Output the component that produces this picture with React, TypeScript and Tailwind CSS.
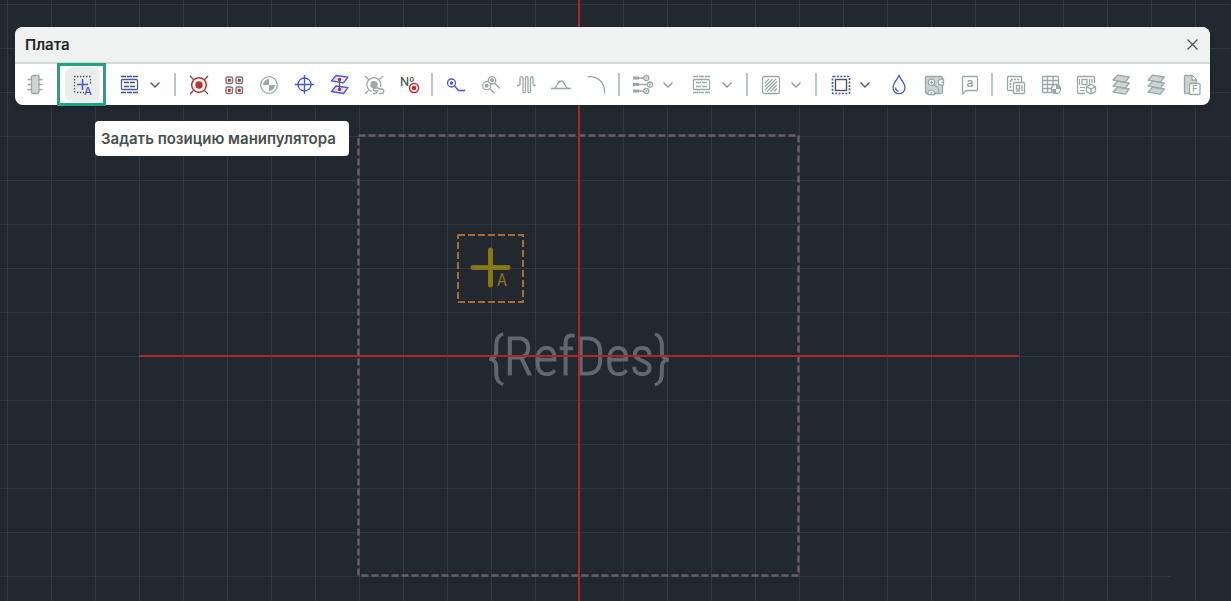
import type { ReactNode } from "react";
import clsx from "clsx";

const GRAY = "#9aa8a6";
const LIGHT = "#cdd5d4";
const DARK = "#4a5858";
const BLUE = "#4059d0";
const RED = "#b8322e";

type IconProps = { children: ReactNode; color?: string };

function Icon({ children, color = GRAY }: IconProps) {
  return (
    <svg
      width="21"
      height="21"
      viewBox="0 0 21 21"
      fill="none"
      stroke={color}
      strokeWidth="1.3"
      className="shrink-0 overflow-visible"
      aria-hidden="true"
    >
      {children}
    </svg>
  );
}

function ChipIcon() {
  return (
    <Icon>
      <path d="M2.5 5.5h15M2.5 10.5h15M2.5 15.5h15" />
      <rect x="6.5" y="1.5" width="7.5" height="18" rx="1.5" fill={LIGHT} />
    </Icon>
  );
}

function ManipulatorIcon() {
  return (
    <Icon color={BLUE}>
      <path
        d="M2 2.5h17M2.5 5v14M18.5 5v6M5 18.5h7"
        stroke={DARK}
        strokeDasharray="1.5 1.5"
      />
      <path d="M5 10.5h11M10.5 5v11" strokeWidth="1.5" />
      <text
        x="12"
        y="21"
        fontSize="11"
        fontWeight="500"
        fill={BLUE}
        stroke="none"
        className="font-['Inter',sans-serif]"
      >
        A
      </text>
    </Icon>
  );
}

function RoomIcon({ disabled = false }: { disabled?: boolean }) {
  const line = disabled ? GRAY : DARK;
  return (
    <Icon color={disabled ? GRAY : BLUE}>
      <path
        d="M2 2.5h17M2 18.5h17M5 8.5h11M5 12.5h11"
        stroke={line}
        strokeDasharray="5 1"
      />
      <rect x="2.5" y="5.5" width="16" height="10" rx="1" />
    </Icon>
  );
}

function TargetIcon() {
  return (
    <Icon color={RED}>
      <path
        d="M2 2l3.5 3.5M20 2l-3.5 3.5M2 20l3.5-3.5M20 20l-3.5-3.5"
        stroke={DARK}
      />
      <circle cx="11" cy="11" r="7.3" strokeWidth="1.5" />
      <circle cx="11" cy="11" r="3.7" fill={RED} stroke="none" />
    </Icon>
  );
}

function PadsIcon() {
  return (
    <Icon color="#6f7e7d">
      {[3, 13].map((x) =>
        [3, 13].map((y) => (
          <g key={`${x}-${y}`}>
            <rect x={x} y={y} width="6.5" height="6.5" rx="1.5" strokeWidth="1.5" />
            <rect
              x={x + 1.75}
              y={y + 1.75}
              width="3"
              height="3"
              fill={RED}
              stroke="none"
            />
          </g>
        ))
      )}
    </Icon>
  );
}

function OriginIcon() {
  return (
    <Icon>
      <circle cx="11" cy="11" r="8.3" />
      <path d="M11 11V5a6 6 0 0 0-6 6zM11 11v6a6 6 0 0 0 6-6z" fill={GRAY} stroke="none" />
    </Icon>
  );
}

function CrosshairIcon() {
  return (
    <Icon color={BLUE}>
      <circle cx="11.5" cy="10.5" r="6.5" />
      <path d="M2 10.5h19M11.5 1v19" />
    </Icon>
  );
}

function ViaIcon() {
  return (
    <Icon color={BLUE}>
      <path d="M8 1.5l12 1.7-4.5 5.6-12-2z" fill="#dde2f8" strokeLinejoin="round" />
      <path d="M8 12l12 1.7-4.5 5.8-12-2z" fill="#dde2f8" strokeLinejoin="round" />
      <path d="M11.5 6v10" stroke={RED} />
      <circle cx="11.5" cy="5.5" r="1.7" fill={RED} stroke="none" />
      <circle cx="11.5" cy="15.5" r="1.7" fill={RED} stroke="none" />
    </Icon>
  );
}

function TargetLinkIcon() {
  return (
    <Icon>
      <path d="M2 2l3.5 3.5M20 2l-3.5 3.5M2 20l3.5-3.5" />
      <path d="M8.5 17.3a7 7 0 1 1 9-4.3" />
      <circle cx="11" cy="10.7" r="3.7" fill={GRAY} stroke="none" />
      <path d="M15.5 17h-4a1.6 1.6 0 0 1 0-3h3.5q1.5 0 1.5 1.5M10 19.500h3l1.500-2.500M16 15h2.500a2 2 0 0 1 0 4.500h-3" />
    </Icon>
  );
}

function NumberIcon() {
  return (
    <Icon color={RED}>
      <text
        x="2"
        y="12"
        fontSize="12"
        fontWeight="500"
        fill={DARK}
        stroke="none"
        className="font-['Inter',sans-serif]"
      >
        Nº
      </text>
      <circle cx="16" cy="14" r="4.5" fill="#fff" strokeWidth="1.5" />
      <circle cx="16" cy="14" r="2.3" fill={RED} stroke="none" />
    </Icon>
  );
}

function TraceIcon() {
  return (
    <Icon color={BLUE}>
      <circle cx="6.5" cy="9" r="4" />
      <circle cx="6.5" cy="9" r="1.7" fill={BLUE} stroke="none" />
      <path d="M9.5 12l4 4.5H20" />
    </Icon>
  );
}

function TracePairIcon() {
  return (
    <Icon>
      <circle cx="12" cy="6.3" r="3.7" />
      <circle cx="12" cy="6.3" r="1.3" fill={GRAY} />
      <path d="M14.5 9l5.3 5.5" />
      <circle cx="6.7" cy="11.7" r="4" fill="#fff" />
      <circle cx="6.7" cy="11.7" r="1.3" fill={GRAY} />
      <path d="M9.5 14.5l5 4.8" />
    </Icon>
  );
}

function MeanderIcon() {
  return (
    <Icon>
      <path d="M2 11.5h1.5q1.5 0 1.5-1.5V4q0-1.3 1.5-1.3T8 4v13.5q0 1.2 1.3 1.2t1.2-1.2V4q0-1.3 1.2-1.3T13 4v13.5q0 1.2 1.2 1.2t1.3-1.2V4q0-1.3 1.3-1.3T18 4v6q0 1.5 1.5 1.5H21" />
    </Icon>
  );
}

function BumpIcon() {
  return (
    <Icon>
      <path d="M1 14.5h20" strokeWidth="1.6" />
      <path d="M4 14.5C7 14 7 7 11 7s4 7 7 7.5" />
    </Icon>
  );
}

function ArcIcon() {
  return (
    <Icon>
      <path d="M2.3 2.7H5c8 0 14.5 6 14.5 14v3" />
    </Icon>
  );
}

function FanoutIcon() {
  return (
    <Icon>
      <path d="M7 4h4.5M7 10.5h8.5M7 17h4.5" />
      <path d="M1 2.5h6v3H1zM1 9h6v3H1zM1 15.5h6v3H1z" fill={GRAY} stroke="none" />
      <circle cx="14.3" cy="4" r="2.5" />
      <circle cx="18" cy="10.5" r="2.5" />
      <circle cx="14.3" cy="17" r="2.5" />
      <path d="M13.5 4.8l1.6-1.6M17.2 11.3l1.6-1.6M13.5 17.8l1.6-1.6" />
    </Icon>
  );
}

function HatchIcon() {
  return (
    <Icon>
      <rect x="2.5" y="2.5" width="17" height="17" rx="2" />
      <path d="M5 9l4-4M5 12.5L12.5 5M5 16L16 5M7 17.5L17 7.5M10.5 17.5L17 11M14 17.5l3-3" />
    </Icon>
  );
}

function RegionIcon() {
  return (
    <Icon color={BLUE}>
      <rect x="3.5" y="2.5" width="17" height="17" rx="1" strokeWidth="1.7" strokeDasharray="2 1.4" />
      <rect x="6.5" y="5.5" width="11" height="11" stroke={DARK} strokeWidth="1.4" />
    </Icon>
  );
}

function DropIcon() {
  return (
    <Icon color={BLUE}>
      <path d="M11 1.5C9 6 5 9.5 5 13.7a6 6 0 0 0 12 0C17 9.5 13 6 11 1.5z" />
      <path d="M7.5 13.5c0 2 1.2 3.3 3 3.5" />
    </Icon>
  );
}

function PolygonIcon() {
  return (
    <Icon>
      <rect x="2.5" y="2.5" width="17" height="17" rx="1.5" fill={LIGHT} />
      <path d="M20.5 5.2h-2.2a3 3 0 0 0 0 6h2.200zM5 20.5V19a3.2 3.2 0 0 1 6.400 0v1.500z" fill="#fff" />
      <path d="M11 11l2.5 1.5q2 1 2 3v4" />
      <circle cx="8.5" cy="8.3" r="3.2" fill="#fff" />
      <path d="M8.5 6.7v3.200M6.900 8.300h3.200M20 8.300h-2M8.200 18v2" strokeWidth="1" />
    </Icon>
  );
}

function CommentIcon() {
  return (
    <Icon>
      <path d="M5.5 2.5h13q1 0 1 1v12q0 1-1 1H8L4.5 20V3.5q0-1 1-1z" />
      <text
        x="12"
        y="13"
        textAnchor="middle"
        fontSize="12"
        fontWeight="600"
        fill={GRAY}
        stroke="none"
        className="font-['Inter',sans-serif]"
      >
        a
      </text>
    </Icon>
  );
}

function PanelizeIcon() {
  return (
    <Icon>
      <path d="M8 16.5H3.5q-1 0-1-1v-12q0-1 1-1h12q1 0 1 1V8" />
      <path d="M5.5 14V5.5H15" strokeWidth="1.6" strokeDasharray="2 1" />
      <rect x="8.5" y="8.5" width="11" height="11" rx="1" fill="#fff" />
      <rect x="11.5" y="11.5" width="3" height="3.5" />
      <path d="M17 11v6M11 17h4" />
    </Icon>
  );
}

function DrillTableIcon() {
  return (
    <Icon>
      <rect x="2.5" y="2.5" width="16" height="16" rx="1" />
      <path d="M2.5 6.5h16M2.5 10.5h16M2.5 14.5h16M7.5 2.5v16M13 2.5v16" />
      <circle cx="16" cy="15" r="4.5" fill="#fff" />
      <path d="M16 15v-4a4 4 0 0 1 4 4zM16 15v4a4 4 0 0 1-4-4z" fill={GRAY} stroke="none" />
    </Icon>
  );
}

function BoardModelIcon() {
  return (
    <Icon>
      <path d="M10 19.5H3.5q-1 0-1-1v-15q0-1 1-1h15q1 0 1 1V9" />
      <rect x="7" y="5.5" width="5" height="5" />
      <path d="M4.5 5v6M14.5 5v5M17 5v4M5 13.5h5M5 16.5h4" strokeWidth="1.2" />
      <path d="M16 10.5l4.5 2.2v5L16 20l-4.5-2.3v-5z" fill="#fff" />
      <path d="M11.5 12.7L16 15l4.5-2.3M16 15v5" />
    </Icon>
  );
}

function LayersIcon() {
  return (
    <Icon>
      {[12, 6, 0].map((y) => (
        <path
          key={y}
          transform={`translate(0 ${y})`}
          d="M7.5 1.2l11.8 1.8-4 5.2-12.3-2z"
          fill={LIGHT}
          strokeLinejoin="round"
        />
      ))}
    </Icon>
  );
}

function ReportIcon() {
  return (
    <Icon>
      <path d="M5.5 1.5H12L16.5 6v13.5h-11q-1 0-1-1v-16q0-1 1-1z" fill={LIGHT} />
      <path d="M12 1.5V6h4.5" fill="#fff" />
      <rect x="9.5" y="9.5" width="10.5" height="11" rx="1" fill="#fff" />
      <text
        x="15"
        y="18"
        textAnchor="middle"
        fontSize="9"
        fontWeight="600"
        fill={GRAY}
        stroke="none"
        className="font-['Inter',sans-serif]"
      >
        F
      </text>
    </Icon>
  );
}

type ToolProps = { label: string; active?: boolean; children: ReactNode };

function Tool({ label, active = false, children }: ToolProps) {
  return (
    <button
      type="button"
      aria-label={label}
      className={clsx(
        "flex h-[35px] w-[35px] items-center justify-center rounded-lg",
        active && "bg-[#eceeed]"
      )}
    >
      {children}
    </button>
  );
}

function MenuArrow({ label, disabled = false }: { label: string; disabled?: boolean }) {
  return (
    <button
      type="button"
      aria-label={label}
      className="flex h-[35px] w-4 items-center justify-center"
    >
      <svg width="10" height="7" viewBox="0 0 10 7" fill="none" aria-hidden="true">
        <path
          d="M.5 1.500L5 6l4.500-4.500"
          stroke={disabled ? "#8d9a99" : DARK}
          strokeWidth="1.3"
        />
      </svg>
    </button>
  );
}

function Separator() {
  return <div className="mx-[5px] h-[23px] w-0.5 bg-[#b9c6c5]" />;
}

function Toolbar() {
  return (
    <div className="flex flex-wrap items-center py-[3px] pl-[3px]">
      <div className="flex gap-3 pr-1.5">
        <Tool label="Компонент">
          <ChipIcon />
        </Tool>
        <div className="relative">
          <Tool label="Задать позицию манипулятора" active>
            <ManipulatorIcon />
          </Tool>
          <div className="pointer-events-none absolute -inset-y-1 -left-2 -right-1.5 border-3 border-[#1ba784]" />
          <div
            role="tooltip"
            className="absolute left-[30px] top-[54px] flex h-[35px] items-center whitespace-nowrap rounded bg-white pl-1.5 pr-[13px] pt-0.5 text-[15px] font-semibold text-[#46504f]"
          >
            Задать позицию манипулятора
          </div>
        </div>
        <div className="flex">
          <Tool label="Комната">
            <RoomIcon />
          </Tool>
          <MenuArrow label="Варианты комнаты" />
        </div>
      </div>
      <Separator />
      <div className="flex">
        <Tool label="Контактная площадка">
          <TargetIcon />
        </Tool>
        <Tool label="Массив площадок">
          <PadsIcon />
        </Tool>
        <Tool label="Начало координат">
          <OriginIcon />
        </Tool>
        <Tool label="Точка привязки">
          <CrosshairIcon />
        </Tool>
        <Tool label="Переходное отверстие">
          <ViaIcon />
        </Tool>
        <Tool label="Связать площадку">
          <TargetLinkIcon />
        </Tool>
        <Tool label="Нумерация">
          <NumberIcon />
        </Tool>
      </div>
      <Separator />
      <div className="flex">
        <Tool label="Трек">
          <TraceIcon />
        </Tool>
        <Tool label="Дифференциальная пара">
          <TracePairIcon />
        </Tool>
        <Tool label="Меандр">
          <MeanderIcon />
        </Tool>
        <Tool label="Выравнивание">
          <BumpIcon />
        </Tool>
        <Tool label="Дуга">
          <ArcIcon />
        </Tool>
      </div>
      <Separator />
      <div className="flex gap-2 pr-1.5">
        <div className="flex">
          <Tool label="Фанаут">
            <FanoutIcon />
          </Tool>
          <MenuArrow label="Варианты фанаута" disabled />
        </div>
        <div className="flex">
          <Tool label="Область">
            <RoomIcon disabled />
          </Tool>
          <MenuArrow label="Варианты области" disabled />
        </div>
      </div>
      <Separator />
      <div className="flex pr-1.5">
        <Tool label="Штриховка">
          <HatchIcon />
        </Tool>
        <MenuArrow label="Варианты штриховки" disabled />
      </div>
      <Separator />
      <div className="flex gap-2">
        <div className="flex">
          <Tool label="Регион">
            <RegionIcon />
          </Tool>
          <MenuArrow label="Варианты региона" />
        </div>
        <div className="flex">
          <Tool label="Каплевидность">
            <DropIcon />
          </Tool>
          <Tool label="Полигон">
            <PolygonIcon />
          </Tool>
          <Tool label="Примечание">
            <CommentIcon />
          </Tool>
        </div>
      </div>
      <Separator />
      <div className="flex">
        <Tool label="Панель плат">
          <PanelizeIcon />
        </Tool>
        <Tool label="Таблица отверстий">
          <DrillTableIcon />
        </Tool>
        <Tool label="Модель платы">
          <BoardModelIcon />
        </Tool>
        <Tool label="Слои">
          <LayersIcon />
        </Tool>
        <Tool label="Стек слоёв">
          <LayersIcon />
        </Tool>
        <Tool label="Файл">
          <ReportIcon />
        </Tool>
      </div>
    </div>
  );
}

// Grid step is 44px; the sheet border line at y=576 stops before the edge
const columns = Array.from({ length: 60 }, (_, i) => 7 + i * 44);
const rows = Array.from({ length: 13 }, (_, i) => 4 + i * 44);

function BoardCanvas() {
  return (
    <svg className="absolute inset-0 h-full w-full" aria-hidden="true">
      <g fill="#9fb0b8" fillOpacity="0.12">
        {rows.map((y) => (
          <rect key={y} x="0" y={y} width="100%" height="1" />
        ))}
        <rect x="0" y="576" width="1171" height="1" />
        {columns.map((x) => (
          <rect key={x} x={x} y="0" width="1" height="100%" />
        ))}
      </g>

      <rect
        x="358.5"
        y="135.5"
        width="440"
        height="440"
        fill="none"
        stroke="#6c5a66"
        strokeWidth="2.5"
        strokeDasharray="7 3"
      />

      <text
        x="579"
        y="375"
        textAnchor="middle"
        fontSize="54"
        fill="#63676e"
        stroke="#63676e"
        strokeWidth="1"
        className="font-['Roboto_Condensed','Liberation_Sans_Narrow',Roboto,sans-serif] font-light"
      >
        {"{RefDes}"}
      </text>

      <rect
        x="458"
        y="235"
        width="65"
        height="67"
        fill="none"
        stroke="#a66c33"
        strokeWidth="2"
        strokeDasharray="7 3"
      />
      <g stroke="#8a701a" strokeWidth="5" strokeLinecap="round">
        <path d="M473 267.5h35M490.5 250v35" />
      </g>
      <path d="M475 267.5h31M490.5 252v31" stroke="#80801a" strokeWidth="2" />
      <text
        x="502"
        y="286"
        textAnchor="middle"
        fontSize="18"
        fill="#8a701a"
        className="font-['Roboto_Condensed','Liberation_Sans_Narrow',Roboto,sans-serif]"
      >
        A
      </text>

      <g fill="#a52a2a">
        <rect x="139" y="355" width="880" height="2" />
        <rect x="578" y="0" width="2" height="100%" />
      </g>
    </svg>
  );
}

export default function App() {
  return (
    <main className="relative min-h-screen overflow-hidden bg-[#222830] pt-[27px] font-['Inter',sans-serif]">
      <BoardCanvas />
      <section className="relative ml-[15px] mr-[21px] rounded-lg bg-white shadow-md">
        <header className="flex h-[37px] items-center justify-between rounded-t-lg border-b-2 border-[#cddad8] bg-[#f0f2f1] pl-2.5 pr-3">
          <h1 className="pt-0.5 text-[15px] font-semibold text-[#20262a]">Плата</h1>
          <button type="button" aria-label="Закрыть">
            <svg width="11" height="11" viewBox="0 0 11 11" aria-hidden="true">
              <path d="M.5.5l10 10M10.5.5l-10 10" stroke={DARK} strokeWidth="1.3" />
            </svg>
          </button>
        </header>
        <Toolbar />
      </section>
    </main>
  );
}
